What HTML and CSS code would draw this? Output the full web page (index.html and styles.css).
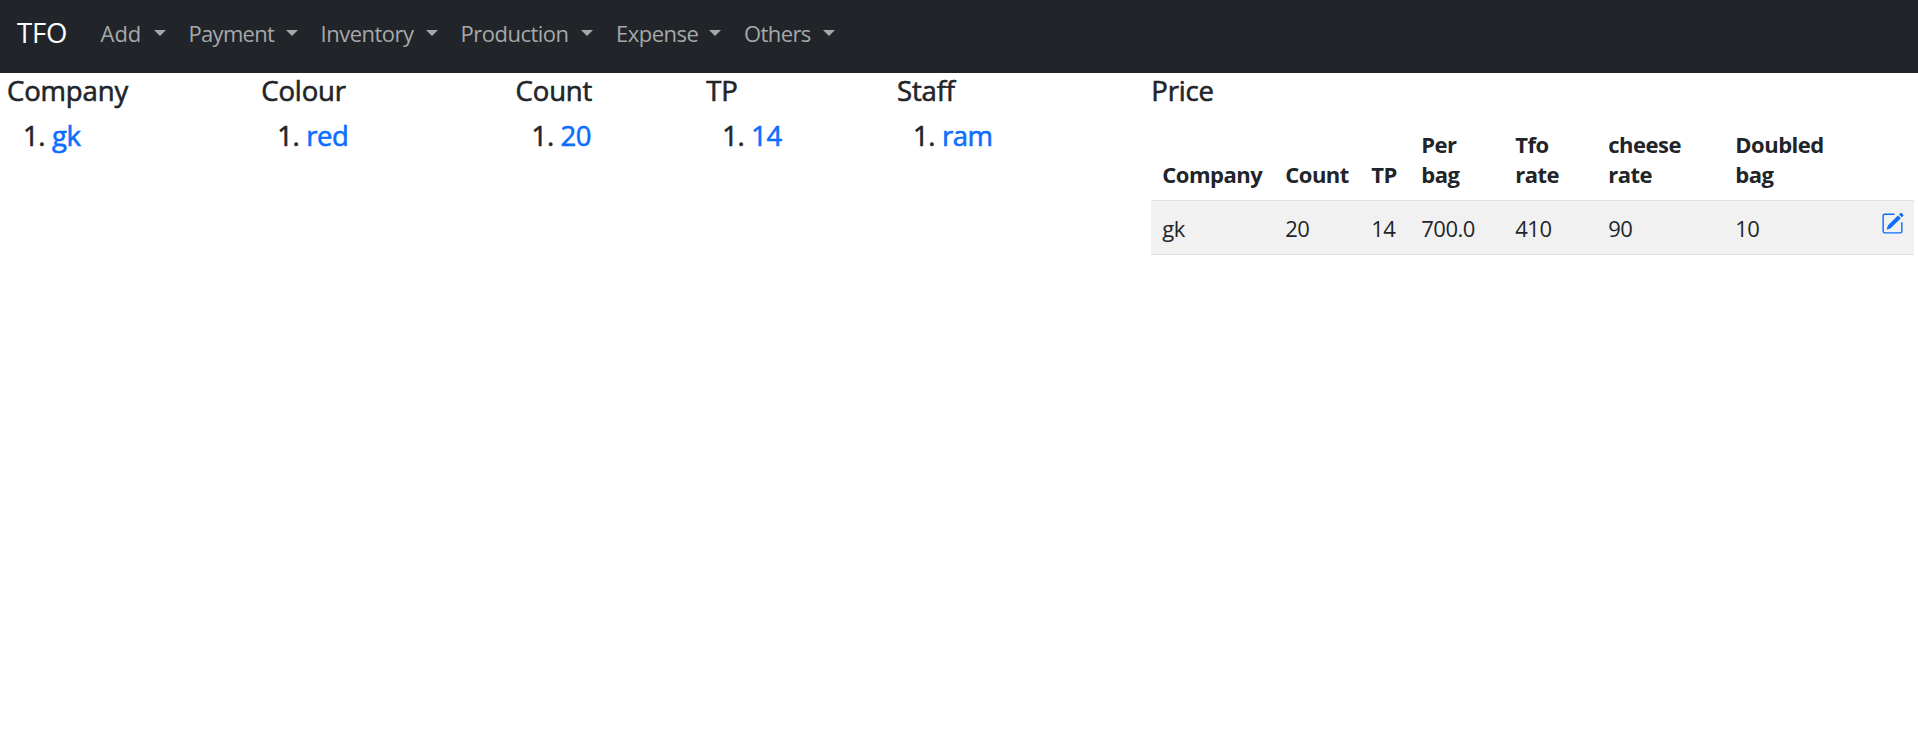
FILE: index.html
```html
<!DOCTYPE html>
<html lang="en">
<head>
<meta charset="utf-8">
<title>TFO</title>
<link rel="stylesheet" href="styles.css">
</head>
<body>
<nav class="navbar">
  <a class="brand">TFO</a>
  <a class="nav-link add"><span>Add</span></a>
  <a class="nav-link payment"><span>Payment</span></a>
  <a class="nav-link inventory"><span>Inventory</span></a>
  <a class="nav-link production"><span>Production</span></a>
  <a class="nav-link expense"><span>Expense</span></a>
  <a class="nav-link others"><span>Others</span></a>
</nav>
<main class="row">
  <section class="col"><h5 class="title">Company</h5><div class="item">1. <a>gk</a></div></section>
  <section class="col"><h5 class="title">Colour</h5><div class="item">1. <a>red</a></div></section>
  <section class="col"><h5 class="title">Count</h5><div class="item">1. <a>20</a></div></section>
  <section class="col"><h5 class="title">TP</h5><div class="item">1. <a>14</a></div></section>
  <section class="col"><h5 class="title">Staff</h5><div class="item">1. <a>ram</a></div></section>
  <section class="col">
    <h5 class="title">Price</h5>
    <table class="table">
      <colgroup><col class="c1"><col class="c2"><col class="c3"><col class="c4"><col class="c5"><col class="c6"><col class="c7"><col class="c8"></colgroup>
      <thead><tr><th>Company</th><th>Count</th><th>TP</th><th>Per<br>bag</th><th>Tfo<br>rate</th><th>cheese<br>rate</th><th>Doubled<br>bag</th><th></th></tr></thead>
      <tbody><tr><td>gk</td><td>20</td><td>14</td><td>700.0</td><td>410</td><td>90</td><td>10</td>
      <td class="edit"><svg class="icon" viewBox="0 0 16 16" fill="currentColor"><path d="M15.502 1.94a.5.5 0 0 1 0 .706L14.459 3.69l-2-2L13.502.646a.5.5 0 0 1 .707 0l1.293 1.293zm-1.75 2.456-2-2L4.939 9.21a.5.5 0 0 0-.121.196l-.805 2.414a.25.25 0 0 0 .316.316l2.414-.805a.5.5 0 0 0 .196-.12l6.813-6.814z"/><path fill-rule="evenodd" d="M1 13.5A1.5 1.5 0 0 0 2.5 15h11a1.5 1.5 0 0 0 1.5-1.5v-6a.5.5 0 0 0-1 0v6a.5.5 0 0 1-.5.5h-11a.5.5 0 0 1-.5-.5v-11a.5.5 0 0 1 .5-.5H9a.5.5 0 0 0 0-1H2.500A1.5 1.5 0 0 0 1 2.500v11z"/></svg></td></tr></tbody>
    </table>
  </section>
</main>
</body>
</html>
```
FILE: styles.css
```css
*, ::after { box-sizing: border-box; }
body { margin: 0; background: #fff; color: #212529; font-family: "Open Sans", "Noto Sans", sans-serif; font-size: 22px; line-height: 30px; }
.navbar { display: flex; height: 73px; padding: 18px 0 0 17px; background: #212529; }
.brand { width: 83.5px; color: #fff; font-size: 27.5px; letter-spacing: -0.2px; }
.nav-link { display: flex; justify-content: space-between; margin-right: 23px; color: #a6a8a9; letter-spacing: -0.6px; white-space: nowrap; }
.nav-link::after { content: ""; margin-top: 12px; width: 12px; height: 6px; border: 6px solid transparent; border-top-color: #a6a8a9; border-bottom: 0; }
.add { width: 65px; letter-spacing: 0; }
.payment { width: 109px; letter-spacing: -0.7px; }
.inventory { width: 117px; letter-spacing: -0.5px; }
.production { width: 132.5px; letter-spacing: -0.5px; }
.expense { width: 105px; letter-spacing: -0.5px; }
.others { width: 91px; letter-spacing: -0.6px; }
.row { display: grid; grid-template-columns: 254.3px 254.3px 190.7px 190.7px 254.3px 763px; padding-left: 7px; }
.title, .item { margin: 0; font-size: 27.5px; font-weight: 500; line-height: 34px; letter-spacing: -0.15px; -webkit-text-stroke: 0.6px currentColor; }
.title { padding-top: 1px; height: 36px; }
.item { margin-top: 10px; padding-left: 16px; letter-spacing: -0.4px; }
.item a { color: #0d6efd; }
.table { width: 763px; margin-top: 11px; border-collapse: collapse; table-layout: fixed; letter-spacing: -0.5px; }
.c1 { width: 123px; }
.c2 { width: 86px; }
.c3 { width: 50px; }
.c4 { width: 94px; }
.c5 { width: 93px; }
.c6 { width: 127px; }
.c7 { width: 146px; }
.c8 { width: 44px; }
.table th, .table td { padding: 9px 0 11px 11px; text-align: left; border-bottom: 1px solid #dee2e6; }
.table th { height: 80px; vertical-align: bottom; font-weight: 700; }
.table td { height: 54px; padding-top: 12px; padding-bottom: 9px; vertical-align: top; background: #f1f1f1; }
.table td.edit { color: #0d6efd; padding-top: 11px; }
.icon { display: block; width: 23px; height: 23px; }
```
